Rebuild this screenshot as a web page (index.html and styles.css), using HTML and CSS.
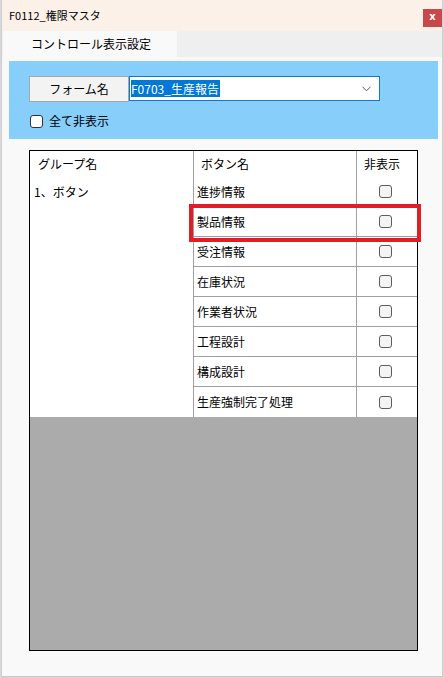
FILE: index.html
```html
<!DOCTYPE html>
<html lang="ja">
<head>
<meta charset="utf-8">
<title>F0112_権限マスタ</title>
<link rel="stylesheet" href="styles.css">
</head>
<body>
<div class="window">
  <div class="titlebar">
    <span class="title">F0112_権限マスタ</span>
    <span class="close">x</span>
  </div>
  <div class="tabstrip">
    <div class="tab">コントロール表示設定</div>
  </div>
  <div class="content">
    <div class="panel">
      <div class="formrow">
        <div class="btn">フォーム名</div>
        <div class="combo">
          <span class="sel">F0703_生産報告</span>
          <svg class="chev" width="9" height="6" viewBox="0 0 9 6"><path d="M0.5 0.8 L4.5 4.8 L8.5 0.8" fill="none" stroke="#555" stroke-width="1"/></svg>
        </div>
      </div>
      <label class="allhide"><span class="cb cb-panel"></span><span>全て非表示</span></label>
    </div>
    <div class="grid">
      <div class="gridcols">
        <div class="col col1">
          <div class="hdr">グループ名</div>
          <div class="grp">1、ボタン</div>
        </div>
        <div class="col col2">
          <div class="hdr">ボタン名</div>
          <div class="cell">進捗情報</div>
          <div class="cell">製品情報</div>
          <div class="cell">受注情報</div>
          <div class="cell">在庫状況</div>
          <div class="cell">作業者状況</div>
          <div class="cell">工程設計</div>
          <div class="cell">構成設計</div>
          <div class="cell">生産強制完了処理</div>
        </div>
        <div class="col col3">
          <div class="hdr hdr3">非表示</div>
          <div class="cell ck"><span class="cb"></span></div>
          <div class="cell ck"><span class="cb"></span></div>
          <div class="cell ck"><span class="cb"></span></div>
          <div class="cell ck"><span class="cb"></span></div>
          <div class="cell ck"><span class="cb"></span></div>
          <div class="cell ck"><span class="cb"></span></div>
          <div class="cell ck"><span class="cb"></span></div>
          <div class="cell ck"><span class="cb"></span></div>
        </div>
      </div>
      <div class="empty"></div>
      <div class="highlight"></div>
    </div>
  </div>
</div>
</body>
</html>
```

FILE: styles.css
```css
* { box-sizing: border-box; }
html, body { margin: 0; padding: 0; }
body {
  width: 444px;
  height: 678px;
  background: #d8d8d8;
  font-family: "Noto Sans CJK JP", "Noto Sans", sans-serif;
  font-size: 12px;
  color: #000;
  overflow: hidden;
}
.window {
  margin-left: 1px;
  width: 442px;
  height: 677px;
  background: #f9f9f9;
  border-left: 1px solid #cfcfcf;
  border-right: 1px solid #cfcfcf;
  border-bottom: 1px solid #c8c8c8;
  display: flex;
  flex-direction: column;
}
.titlebar {
  height: 31px;
  background: #fbf1e9;
  display: flex;
  align-items: center;
  justify-content: space-between;
  padding-left: 7px;
  padding-right: 0;
}
.title { font-size: 11px; line-height: 1; }
.close {
  align-self: flex-start;
  margin-top: 9px;
  width: 19px;
  height: 18px;
  background: #c9494b;
  color: #fff;
  font-family: "DejaVu Sans", sans-serif;
  font-weight: bold;
  font-size: 10px;
  line-height: 16px;
  text-align: center;
}
.tabstrip {
  height: 26px;
  background: #efefef;
  display: flex;
}
.tab {
  margin-left: 1px;
  width: 174px;
  background: #f9f9f9;
  padding-left: 28px;
  line-height: 26px;
  font-size: 12px;
}
.content {
  padding: 4px 4px 0 7px;
}
.panel {
  width: 429px;
  height: 78px;
  background: #87cefa;
  padding: 15px 0 0 20px;
}
.formrow { display: flex; height: 26px; }
.btn {
  width: 100px;
  height: 26px;
  background: #f3f3f3;
  border: 1px solid #a6a6a6;
  text-align: center;
  line-height: 23px;
}
.combo {
  width: 251px;
  height: 25px;
  background: #fff;
  border: 1px solid #0f79d0;
  display: flex;
  align-items: center;
  justify-content: space-between;
  padding: 0 8px 0 1px;
}
.sel {
  background: #0078d7;
  color: #fff;
  line-height: 17px;
  padding: 0 1px 0 0;
}
.chev { margin-top: 1px; }
.allhide {
  display: flex;
  align-items: center;
  gap: 6px;
  margin-top: 11px;
  margin-left: 1px;
  line-height: 16px;
}
.cb {
  display: inline-block;
  width: 13px;
  height: 13px;
  border: 1px solid #5c5c5c;
  border-radius: 3px;
  background: #f4f4f4;
}
.cb-panel { background: #fff; border-color: #333; }
.grid {
  position: relative;
  margin-top: 11px;
  margin-left: 20px;
  width: 389px;
  height: 501px;
  border: 1px solid #000;
  display: flex;
  flex-direction: column;
}
.gridcols { display: flex; background: #fff; }
.col { display: flex; flex-direction: column; }
.col1 { width: 164px; border-right: 1px solid #a0a0a0; }
.col2 { width: 163px; border-right: 1px solid #a0a0a0; }
.col3 { width: 60px; }
.hdr { height: 26px; line-height: 26px; padding-left: 8px; }
.hdr3 { padding-left: 7px; }
.grp { height: 240px; padding-left: 4px; line-height: 30px; }
.col2 .hdr { padding-left: 7px; }
.cell {
  height: 30px;
  line-height: 29px;
  border-bottom: 1px solid #a0a0a0;
  padding-left: 3px;
}
.col2 .cell:last-child, .col3 .cell:last-child { border-bottom: none; }
.ck { display: flex; align-items: center; justify-content: center; padding-left: 0; padding-right: 3px; }
.empty { flex: 1; background: #ababab; }
.highlight {
  position: absolute;
  left: 159px;
  top: 53px;
  width: 232px;
  height: 38px;
  border: 4px solid #e21d26;
}
```
